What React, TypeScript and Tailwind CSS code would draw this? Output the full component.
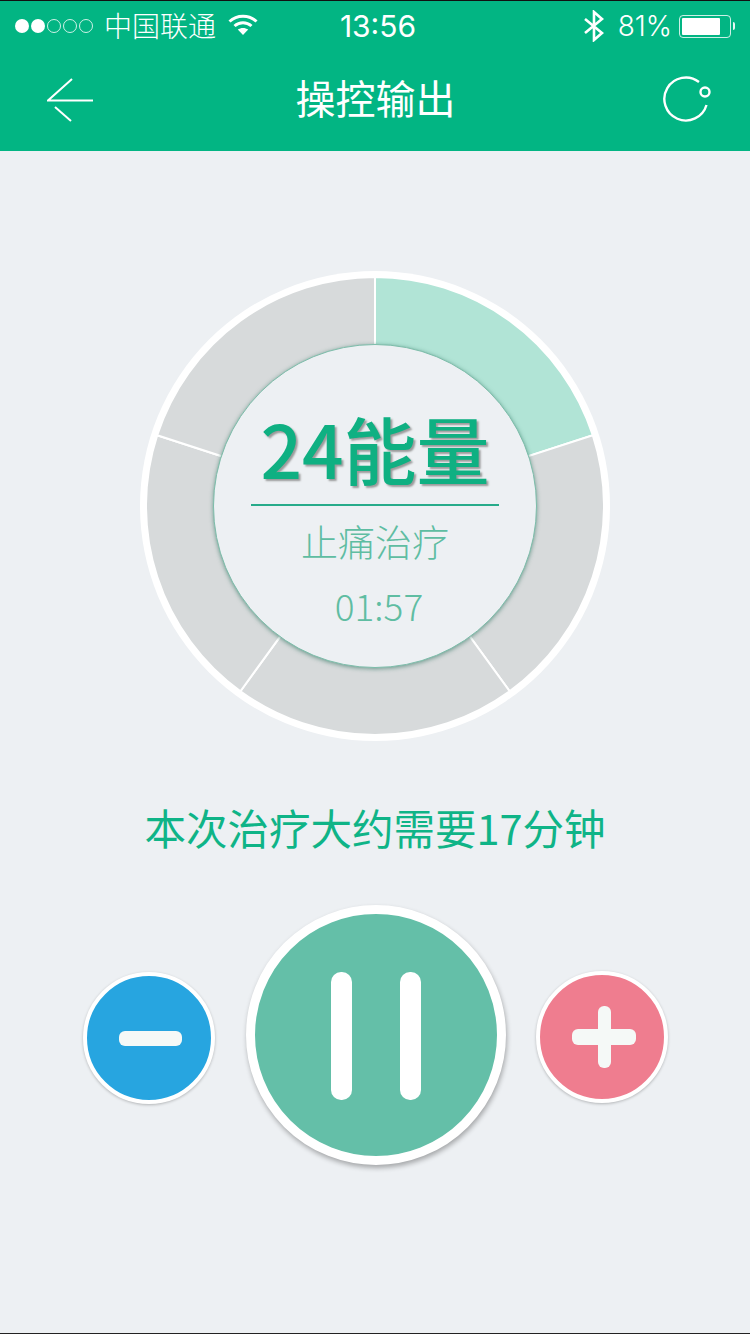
import React from 'react';

const cjk = "font-['Noto_Sans_CJK_SC',sans-serif]";

// 72 degree wedges of the dial, starting from twelve o'clock
function wedge(index: number) {
  const cx = 235;
  const cy = 235;
  const r = 229;
  const a0 = ((-90 + index * 72) * Math.PI) / 180;
  const a1 = ((-90 + (index + 1) * 72) * Math.PI) / 180;
  return `M${cx} ${cy}L${cx + r * Math.cos(a0)} ${cy + r * Math.sin(a0)}A${r} ${r} 0 0 1 ${cx + r * Math.cos(a1)} ${cy + r * Math.sin(a1)}Z`;
}

function StatusBar() {
  return (
    <div className="grid h-[50px] grid-cols-3 items-center text-white">
      <div className="flex items-center pl-[15px]">
        <div className="flex gap-[2px]">
          <span className="size-[14px] rounded-full bg-white" />
          <span className="size-[14px] rounded-full bg-white" />
          <span className="size-[14px] rounded-full border border-white/80" />
          <span className="size-[14px] rounded-full border border-white/80" />
          <span className="size-[14px] rounded-full border border-white/80" />
        </div>
        <span className={`mb-[3px] ml-[11px] text-[28px] leading-none whitespace-nowrap font-light ${cjk}`}>中国联通</span>
        <svg className="ml-[12px] mb-[4px] shrink-0" width="30" height="22" viewBox="0 0 30 22" fill="none" stroke="white" strokeWidth="3">
          <path d="M1.5 8.5C9 1.5 21 1.5 28.5 8.5" />
          <path d="M6.5 13C11.5 8.5 18.5 8.5 23.5 13" />
          <path d="M15 22L9.8 16.6C12.7 14.4 17.3 14.4 20.2 16.6Z" fill="white" stroke="none" />
        </svg>
      </div>
      <div className="pl-[6px] text-center font-['Inter',sans-serif] text-[30px] font-normal leading-none">13:56</div>
      <div className="flex items-center justify-end pr-[13px]">
        <svg width="22" height="32" viewBox="0 0 22 32" fill="none" stroke="white" strokeWidth="2.6" className="mr-[13px]">
          <path d="M2 9L19 23L11 30V2L19 9L2 23" />
        </svg>
        <span className="font-['Inter',sans-serif] text-[28px] font-light leading-none">81%</span>
        <div className="ml-[7px] flex h-[23px] w-[52px] items-center rounded-[4px] border border-white/80 p-[2px]">
          <div className="h-full w-[38px] rounded-[1px] bg-white" />
        </div>
        <div className="ml-[2px] mr-[2px] h-[8px] w-[2px] rounded-r-full bg-white/90" />
      </div>
    </div>
  );
}

function NavBar() {
  return (
    <div className="flex h-[100px] items-center justify-between pl-[47px] pr-[37px]">
      <svg width="48" height="48" viewBox="0 0 48 48" fill="none" stroke="white" strokeWidth="2" className="mb-[1px]">
        <path d="M25 2L1 23.5H46" />
        <path d="M8 30L24 44" />
      </svg>
      <h1 className={`mb-[9px] mr-[7px] text-[40px] font-normal leading-none text-white ${cjk}`}>操控输出</h1>
      <svg width="50" height="50" viewBox="0 0 50 50" fill="none" stroke="white" strokeWidth="2.4" className="mb-[2px]">
        <path d="M36 7A21.5 21.5 0 1 0 43.5 30" />
        <circle cx="42" cy="17" r="4.5" />
      </svg>
    </div>
  );
}

function Dial() {
  return (
    <div className="relative mt-[120px] size-[470px] rounded-full bg-white">
      <svg width="470" height="470" viewBox="0 0 470 470">
        {[0, 1, 2, 3, 4].map((i) => (
          <path key={i} d={wedge(i)} fill={i === 0 ? '#b1e4d6' : '#d7dadb'} stroke="white" strokeWidth="2" />
        ))}
      </svg>
      <div className="absolute left-[73px] top-[73px] flex size-[324px] flex-col items-center rounded-full border border-[#7dbdaa] bg-[#edf0f3] shadow-[0_1px_4px_rgba(40,110,90,0.6)]">
        <div className={`mt-[57px] text-[73px] font-medium leading-[90px] whitespace-nowrap text-[#0fb082] [text-shadow:2px_2px_2px_#9a9a9a] ${cjk}`}>24能量</div>
        <div className="mt-[12px] h-[2px] w-[248px] bg-[#27ab8a]" />
        <div className={`mt-[11px] text-[37px] font-light leading-[48px] text-[#5fbda2] ${cjk}`}>止痛治疗</div>
        <div className={`ml-[8px] mt-[16px] text-[37px] font-light leading-[48px] text-[#5fbda2] ${cjk}`}>01:57</div>
      </div>
    </div>
  );
}

function Controls() {
  return (
    <div className="mt-[50px] flex items-center">
      <button className="mt-[5px] flex size-[132px] items-center justify-center rounded-full border-[4px] border-white bg-[#27a5e0] pt-[2px] shadow-[0_1px_3px_rgba(0,0,0,0.25)]">
        <span className="ml-[4px] h-[15px] w-[63px] rounded-[6px] bg-[#f5f9f7]" />
      </button>
      <button className="ml-[31px] flex size-[260px] items-center justify-center gap-[48px] rounded-full border-[9px] border-white bg-[#64bfa8] pt-[2px] shadow-[1px_3px_5px_rgba(0,0,0,0.3)]">
        <span className="h-[128px] w-[21px] rounded-[10px] bg-white" />
        <span className="h-[128px] w-[21px] rounded-[10px] bg-white" />
      </button>
      <button className="relative ml-[30px] mt-[3px] flex size-[132px] items-center justify-center rounded-full border-[4px] border-white bg-[#ef7d8f] pl-[5px] shadow-[0_1px_3px_rgba(0,0,0,0.25)]">
        <span className="h-[16px] w-[64px] rounded-[6px] bg-[#f5f9f7]" />
        <span className="absolute h-[62px] w-[13px] rounded-[6px] bg-[#f5f9f7]" />
      </button>
    </div>
  );
}

export default function App() {
  return (
    <div className="flex h-[1334px] w-[750px] flex-col overflow-hidden bg-[#edf0f3]">
      <header className="border-t border-[#111] bg-[#02b583]">
        <StatusBar />
        <NavBar />
      </header>
      <main className="flex flex-1 flex-col items-center">
        <Dial />
        <p className={`mt-[58px] text-[41.5px] font-normal leading-[56px] whitespace-nowrap text-[#0fb487] ${cjk}`}>本次治疗大约需要17分钟</p>
        <Controls />
      </main>
      <div className="h-px bg-[#222]" />
    </div>
  );
}
